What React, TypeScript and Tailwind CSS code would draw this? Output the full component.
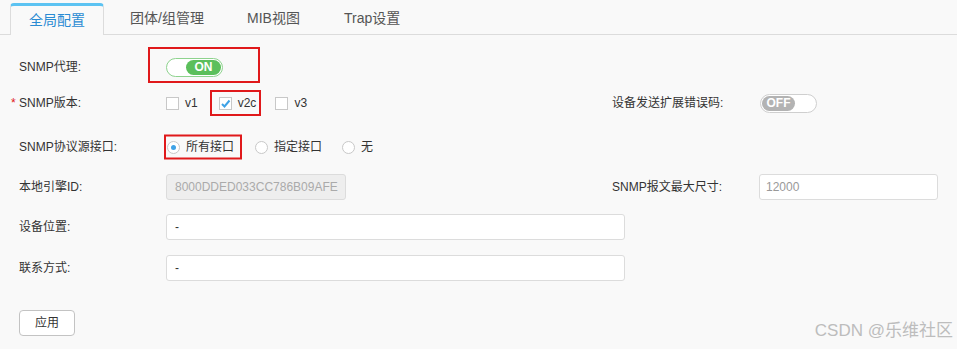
import React from "react";

const font = { fontFamily: '"Liberation Sans", "Noto Sans CJK SC", sans-serif' };

function RedBox({ className }: { className: string }) {
  return <div className={`absolute border-2 border-[#e0191b] pointer-events-none top-1/2 -translate-y-1/2 ${className}`} />;
}

function Checkbox({ checked, label }: { checked?: boolean; label: string }) {
  return (
    <div className="flex items-center">
      <div className="w-[13px] h-[13px] border border-[#c8c8c8] bg-white flex items-center justify-center">
        {checked && (
          <svg width="11" height="11" viewBox="0 0 11 11">
            <path d="M2 6 L4.5 8.5 L9.5 2.5" stroke="#3ea2e6" strokeWidth="2" fill="none" />
          </svg>
        )}
      </div>
      <span className="ml-[6px] text-[12px] text-[#333]">{label}</span>
    </div>
  );
}

function Radio({ checked, label }: { checked?: boolean; label: string }) {
  return (
    <div className="flex items-center">
      <div className="w-[13px] h-[13px] rounded-full border border-[#c8c8c8] bg-white flex items-center justify-center">
        {checked && <div className="w-[5px] h-[5px] rounded-full bg-[#3ea2e6]" />}
      </div>
      <span className="ml-[6px] text-[12px] text-[#333]">{label}</span>
    </div>
  );
}

function Label({ children, star }: { children: React.ReactNode; star?: boolean }) {
  return (
    <div className="w-[147px] shrink-0 text-[12px] text-[#333] relative">
      {star && <span className="absolute left-[-8px] top-[0px] text-[#e0191b]">*</span>}
      {children}
    </div>
  );
}

export default function App() {
  return (
    <div className="w-[957px] h-[349px] bg-[#f9f9f9] relative overflow-hidden" style={font}>
      {/* Tabs */}
      <div className="h-[35px] border-b border-[#dcdcdc] flex items-end pl-[10px]">
        <div className="w-[94px] h-[32px] mb-[-1px] bg-[#f9f9f9] border-t-[3px] border-t-[#5cc3f2] border-l border-r border-l-[#dcdcdc] border-r-[#dcdcdc] rounded-t-[4px] flex items-center justify-center text-[14px] text-[#2a8bd3]">
          全局配置
        </div>
        <div className="w-[117px] h-[32px] ml-[26px] flex items-center text-[14px] text-[#555]">团体/组管理</div>
        <div className="w-[97px] h-[32px] flex items-center text-[14px] text-[#555]">MIB视图</div>
        <div className="w-[80px] h-[32px] flex items-center text-[14px] text-[#555]">Trap设置</div>
      </div>

      <div className="pl-[19px] flex flex-col">
        {/* Row 1 */}
        <div className="h-[36px] mt-[14px] flex items-center">
          <Label>SNMP代理:</Label>
          <div className="relative">
            <div className="w-[57px] h-[19px] rounded-full border border-[#8ed38e] bg-white flex items-center justify-end pr-[1px]">
              <div className="w-[35px] h-[15px] rounded-full bg-[#5bbf5b] flex items-center justify-center text-[12px] font-bold text-white">
                ON
              </div>
            </div>
            <RedBox className="left-[-18px] mt-[-2px] w-[112px] h-[36px]" />
          </div>
        </div>

        {/* Row 2 */}
        <div className="h-[36px] flex items-center">
          <Label star>SNMP版本:</Label>
          <div className="w-[446px] flex items-center">
            <div className="mr-[21px]">
              <Checkbox label="v1" />
            </div>
            <div className="relative mr-[19px]">
              <Checkbox checked label="v2c" />
              <RedBox className="left-[-9px] w-[51px] h-[26px]" />
            </div>
            <Checkbox label="v3" />
          </div>
          <div className="w-[148px] text-[12px] text-[#333]">设备发送扩展错误码:</div>
          <div className="w-[57px] h-[19px] rounded-full border border-[#cfcfcf] bg-white flex items-center pl-[1px]">
            <div className="w-[33px] h-[15px] rounded-full bg-[#b3b3b3] flex items-center justify-center text-[12px] font-bold text-white">
              OFF
            </div>
          </div>
        </div>

        {/* Row 3 */}
        <div className="h-[36px] mt-[8px] flex items-center">
          <Label>SNMP协议源接口:</Label>
          <div className="flex items-center">
            <div className="relative mr-[21px] ml-[1px]">
              <Radio checked label="所有接口" />
              <RedBox className="left-[-3px] w-[78px] h-[25px]" />
            </div>
            <div className="mr-[20px]">
              <Radio label="指定接口" />
            </div>
            <Radio label="无" />
          </div>
        </div>

        {/* Row 4 */}
        <div className="h-[36px] mt-[4px] flex items-center">
          <Label>本地引擎ID:</Label>
          <div className="w-[446px]">
            <div className="w-[180px] h-[26px] rounded-[3px] border border-[#dcdcdc] bg-[#eeeeee] flex items-center pl-[8px] text-[12px] text-[#aaa]">
              8000DDED033CC786B09AFE
            </div>
          </div>
          <div className="w-[147px] text-[12px] text-[#333]">SNMP报文最大尺寸:</div>
          <div className="w-[179px] h-[26px] rounded-[3px] border border-[#dcdcdc] bg-white flex items-center pl-[6px] text-[12px] text-[#999]">
            12000
          </div>
        </div>

        {/* Row 5 */}
        <div className="h-[36px] mt-[4px] flex items-center">
          <Label>设备位置:</Label>
          <div className="w-[459px] h-[26px] rounded-[3px] border border-[#dcdcdc] bg-white flex items-center pl-[8px] text-[12px] text-[#333]">
            -
          </div>
        </div>

        {/* Row 6 */}
        <div className="h-[36px] mt-[5px] flex items-center">
          <Label>联系方式:</Label>
          <div className="w-[459px] h-[26px] rounded-[3px] border border-[#dcdcdc] bg-white flex items-center pl-[8px] text-[12px] text-[#333]">
            -
          </div>
        </div>

        {/* Apply */}
        <div className="mt-[24px]">
          <button className="w-[56px] h-[26px] rounded-[4px] border border-[#c3c3c3] bg-white text-[12px] text-[#333] flex items-center justify-center">
            应用
          </button>
        </div>
      </div>

      <div className="absolute right-[4px] bottom-[10px] text-[17px] text-[#bdbdbd] leading-none">CSDN @乐维社区</div>
    </div>
  );
}
